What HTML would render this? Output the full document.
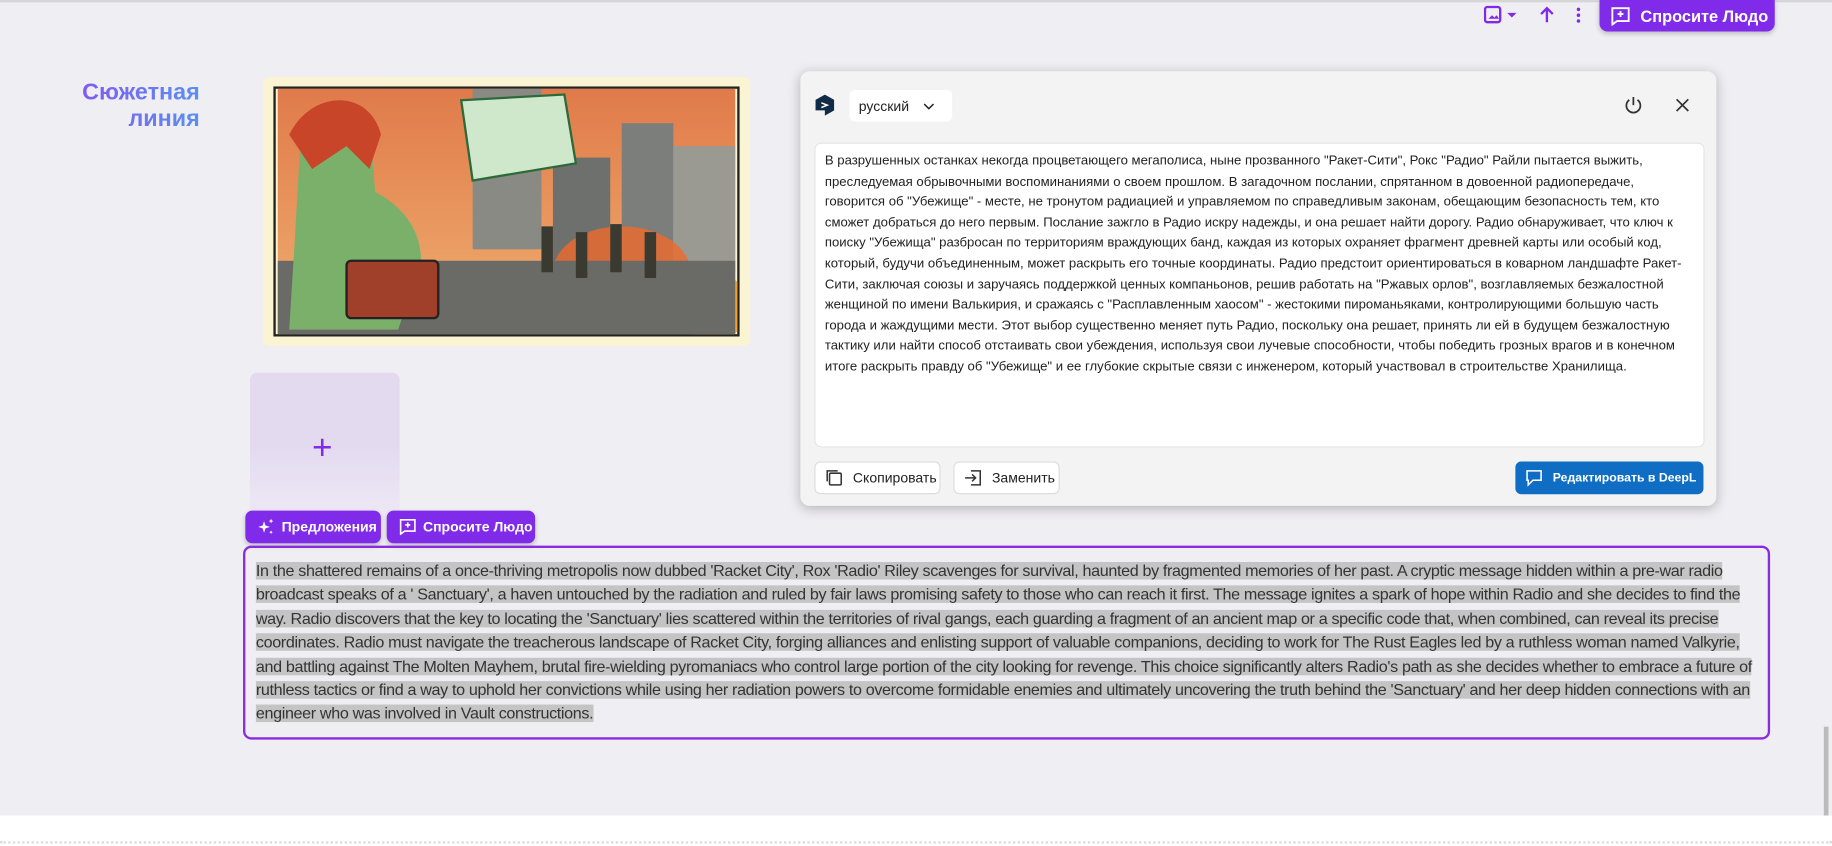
<!DOCTYPE html>
<html><head><meta charset="utf-8"><style>
*{box-sizing:border-box;margin:0;padding:0}
body{width:1832px;height:846px;overflow:hidden;background:#fff;font-family:"Liberation Sans",sans-serif;position:relative}
#w{position:absolute;left:0;top:0;width:1568px;height:724px;transform:scale(1.16837);transform-origin:0 0}
.bg{position:absolute;left:0;top:0;width:1568px;height:698px;background:#efeef3;border-top:2px solid #d6d6d9}
.abs{position:absolute;white-space:nowrap}
.title{left:40px;top:68px;width:131px;text-align:right;font-weight:bold;font-size:20px;line-height:23px;background:linear-gradient(90deg,#8a4cf0,#5b8ff0);-webkit-background-clip:text;color:transparent}
.pbtn{background:#7f2be9;color:#fff;font-weight:bold;font-size:12px;border-radius:6px;display:flex;align-items:center;gap:6px;padding-left:12px;box-shadow:0 2px 4px rgba(0,0,0,.2)}
.deepl{left:685px;top:61px;width:784px;height:372px;background:#f3f3f3;border-radius:8px;box-shadow:0 2px 10px rgba(0,0,0,.25)}
.dtext{left:12px;top:61px;width:762px;height:261px;background:#fff;border:1px solid #e4e4e4;border-radius:6px;padding:7px 8px;font-size:11.25px;line-height:17.6px;color:#222;white-space:normal}
.wbtn{background:#fff;border:1px solid #ddd;border-radius:5px;font-size:12px;color:#222;display:flex;align-items:center;gap:8px;padding-left:8px}
.ta{left:208px;top:467px;width:1307px;height:166px;border:2px solid #8a2be2;border-radius:7px;padding:10px 9px;font-size:13.8px;letter-spacing:-0.3px;line-height:20.4px;color:#333;white-space:normal}
.ta span{background:#c4c4c4}
</style></head><body><div id="w">
<div class="bg"></div>
<svg class="abs" style="left:1270px;top:4px" width="90" height="18" viewBox="0 0 90 18">
<rect x="1" y="2" width="13" height="13" rx="2" fill="none" stroke="#7f2be9" stroke-width="2"/><path d="M4 12l3-3 2 2 2-2 2 3z" fill="#7f2be9"/>
<path d="M20 7l4 4 4-4z" fill="#7f2be9"/>
<path d="M54 15V3M49 8l5-5 5 5" fill="none" stroke="#7f2be9" stroke-width="2"/>
<circle cx="81" cy="4" r="1.5" fill="#7f2be9"/><circle cx="81" cy="9" r="1.5" fill="#7f2be9"/><circle cx="81" cy="14" r="1.5" fill="#7f2be9"/>
</svg>
<div class="abs pbtn" style="left:1369px;top:0;width:150px;height:27px;border-radius:0 0 7px 7px;font-size:14px;gap:9px;padding-left:10px">
<svg width="16" height="16" viewBox="0 0 16 16"><path d="M1 1h14v11H5l-4 3z" fill="none" stroke="#fff" stroke-width="1.6"/><path d="M8 3.5v5M5.5 6h5" stroke="#fff" stroke-width="1.6"/></svg>Спросите Людо</div>
<div class="abs title">Сюжетная<br>линия</div>
<div class="abs" style="left:225px;top:66px;width:417px;height:230px;background:#fbf4d2;border-radius:6px;padding:8px 9px">
<svg width="399" height="214" viewBox="0 0 399 214" style="display:block;border:2px solid #222">
<defs><linearGradient id="sky" x1="0" y1="0" x2="0" y2="1"><stop offset="0" stop-color="#e07a4a"/><stop offset="1" stop-color="#f0b070"/></linearGradient></defs>
<rect width="399" height="214" fill="url(#sky)"/>
<rect x="170" y="0" width="60" height="140" fill="#8a8a85"/><rect x="300" y="30" width="45" height="120" fill="#7c7e7c"/><rect x="345" y="50" width="54" height="110" fill="#9a9a92"/>
<rect x="240" y="60" width="50" height="100" fill="#6e706e"/>
<path d="M160 10l90-5 10 60-90 15z" fill="#cfe8cc" stroke="#2d6a3a" stroke-width="2"/>
<ellipse cx="300" cy="160" rx="60" ry="40" fill="#ee6a2a" opacity=".8"/><ellipse cx="380" cy="190" rx="30" ry="30" fill="#f6a030"/>
<rect x="0" y="150" width="399" height="64" fill="#6a6a66"/>
<path d="M20 40c10-30 50-35 60-10l5 60c20 10 40 30 40 60l-20 60H10l5-80z" fill="#7bb06a"/>
<path d="M10 40c20-40 70-40 80 0l-10 30-20-20-30 20z" fill="#c8452a"/>
<rect x="60" y="150" width="80" height="50" rx="4" fill="#a0402a" stroke="#222" stroke-width="2"/>
<g fill="#3a3a30"><rect x="230" y="120" width="10" height="40"/><rect x="260" y="125" width="10" height="40"/><rect x="290" y="118" width="10" height="42"/><rect x="320" y="125" width="10" height="40"/></g>
</svg></div>
<div class="abs" style="left:214px;top:319px;width:128px;height:126px;border-radius:6px 6px 0 0;background:linear-gradient(#e3daf0 50%,#eee9f5)"></div>
<div class="abs" style="left:267px;top:372px;color:#7f2be9;font-size:30px;line-height:24px">+</div>
<div class="abs pbtn" style="left:210px;top:437px;width:116px;height:28px;padding-left:11px">
<svg width="14" height="14" viewBox="0 0 14 14"><path d="M5 2l1.2 3.8L10 7 6.2 8.2 5 12 3.8 8.2 0 7l3.8-1.2z" fill="#fff"/><path d="M11 0l.6 1.4L13 2l-1.4.6L11 4l-.6-1.4L9 2l1.4-.6zM11 10l.5 1 1 .5-1 .5-.5 1-.5-1-1-.5 1-.5z" fill="#fff"/></svg>Предложения</div>
<div class="abs pbtn" style="left:331px;top:437px;width:127px;height:28px;padding-left:11px">
<svg width="14" height="14" viewBox="0 0 16 16"><path d="M1 1h14v11H5l-4 3z" fill="none" stroke="#fff" stroke-width="1.6"/><path d="M8 3.5v5M5.5 6h5" stroke="#fff" stroke-width="1.6"/></svg>Спросите Людо</div>
<div class="abs deepl">
<svg class="abs" style="left:13px;top:20px" width="16" height="19" viewBox="0 0 16 19"><path d="M8 0l8 4.5v9L8 18v-4.5L0 13.5V4.5z" fill="#0f2b46"/><path d="M5 7l5 2-5 2" fill="none" stroke="#fff" stroke-width="1.3"/></svg>
<div class="abs" style="left:42px;top:16px;width:88px;height:27px;background:#fff;border-radius:5px;font-size:12px;color:#222;padding:7px 8px;display:flex;gap:12px;align-items:center">русский <svg width="10" height="6" viewBox="0 0 10 6"><path d="M1 1l4 4 4-4" fill="none" stroke="#222" stroke-width="1.3"/></svg></div>
<svg class="abs" style="left:705px;top:21px" width="16" height="16" viewBox="0 0 16 16"><path d="M8 1v7M4.5 3.5a6 6 0 1 0 7 0" fill="none" stroke="#333" stroke-width="1.5"/></svg>
<svg class="abs" style="left:749px;top:23px" width="12" height="12" viewBox="0 0 12 12"><path d="M1 1l10 10M11 1L1 11" stroke="#333" stroke-width="1.5"/></svg>
<div class="abs dtext">В разрушенных останках некогда процветающего мегаполиса, ныне прозванного "Ракет-Сити", Рокс "Радио" Райли пытается выжить, преследуемая обрывочными воспоминаниями о своем прошлом. В загадочном послании, спрятанном в довоенной радиопередаче, говорится об "Убежище" - месте, не тронутом радиацией и управляемом по справедливым законам, обещающим безопасность тем, кто сможет добраться до него первым. Послание зажгло в Радио искру надежды, и она решает найти дорогу. Радио обнаруживает, что ключ к поиску "Убежища" разбросан по территориям враждующих банд, каждая из которых охраняет фрагмент древней карты или особый код, который, будучи объединенным, может раскрыть его точные координаты. Радио предстоит ориентироваться в коварном ландшафте Ракет-Сити, заключая союзы и заручаясь поддержкой ценных компаньонов, решив работать на "Ржавых орлов", возглавляемых безжалостной женщиной по имени Валькирия, и сражаясь с "Расплавленным хаосом" - жестокими пироманьяками, контролирующими большую часть города и жаждущими мести. Этот выбор существенно меняет путь Радио, поскольку она решает, принять ли ей в будущем безжалостную тактику или найти способ отстаивать свои убеждения, используя свои лучевые способности, чтобы победить грозных врагов и в конечном итоге раскрыть правду об "Убежище" и ее глубокие скрытые связи с инженером, который участвовал в строительстве Хранилища.</div>
<div class="abs wbtn" style="left:12px;top:334px;width:108px;height:28px"><svg width="16" height="16" viewBox="0 0 16 16"><rect x="4" y="4" width="10" height="10" rx="1" fill="none" stroke="#333" stroke-width="1.3"/><path d="M2 11V2h9" fill="none" stroke="#333" stroke-width="1.3"/></svg>Скопировать</div>
<div class="abs wbtn" style="left:131px;top:334px;width:91px;height:28px"><svg width="16" height="16" viewBox="0 0 16 16"><path d="M6 2h8v12H6M1 8h9M7 5l3 3-3 3" fill="none" stroke="#333" stroke-width="1.3"/></svg>Заменить</div>
<div class="abs" style="left:612px;top:334px;width:161px;height:28px;background:#0f6ec3;border-radius:5px;color:#fff;font-size:10.5px;font-weight:bold;display:flex;align-items:center;gap:8px;padding-left:8px;overflow:hidden"><svg width="16" height="16" viewBox="0 0 16 16"><path d="M2 2h12v8H7l-4 4v-4H2z" fill="none" stroke="#fff" stroke-width="1.3"/></svg>Редактировать в DeepL</div>
</div>
<div class="abs ta"><span>In the shattered remains of a once-thriving metropolis now dubbed 'Racket City', Rox 'Radio' Riley scavenges for survival, haunted by fragmented memories of her past. A cryptic message hidden within a pre-war radio broadcast speaks of a ' Sanctuary', a haven untouched by the radiation and ruled by fair laws promising safety to those who can reach it first. The message ignites a spark of hope within Radio and she decides to find the way. Radio discovers that the key to locating the 'Sanctuary' lies scattered within the territories of rival gangs, each guarding a fragment of an ancient map or a specific code that, when combined, can reveal its precise coordinates. Radio must navigate the treacherous landscape of Racket City, forging alliances and enlisting support of valuable companions, deciding to work for The Rust Eagles led by a ruthless woman named Valkyrie, and battling against The Molten Mayhem, brutal fire-wielding pyromaniacs who control large portion of the city looking for revenge. This choice significantly alters Radio's path as she decides whether to embrace a future of ruthless tactics or find a way to uphold her convictions while using her radiation powers to overcome formidable enemies and ultimately uncovering the truth behind the 'Sanctuary' and her deep hidden connections with an engineer who was involved in Vault constructions.</span></div>
<div class="abs" style="left:1561px;top:622px;width:4px;height:76px;background:#bbb"></div>
<div class="abs" style="left:0;top:720px;width:1568px;border-top:2px dotted #ddd"></div>
</div></body></html>
